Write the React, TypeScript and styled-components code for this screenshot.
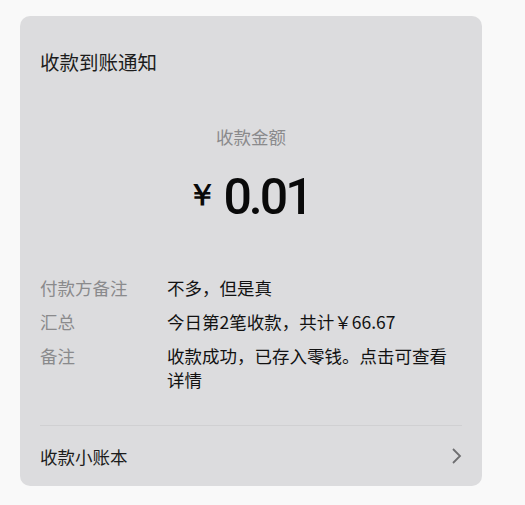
import React from "react";
import styled, { createGlobalStyle } from "styled-components";

const GlobalStyle = createGlobalStyle`
  body {
    margin: 0;
    background: #f9f9f9;
    font-family: "Noto Sans CJK SC", "Noto Sans", sans-serif;
  }
`;

const Page = styled.div`
  padding: 16px 43px 20px 20px;
`;

const Card = styled.div`
  background: #dcdcde;
  border-radius: 10px;
  padding: 0 20px;
  width: 462px;
  box-sizing: border-box;
`;

const Title = styled.div`
  padding-top: 34px;
  font-size: 19.5px;
  line-height: 24px;
  color: #1c1c1c;
`;

const AmountBlock = styled.div`
  display: flex;
  flex-direction: column;
  align-items: center;
  padding-top: 51px;
`;

const AmountLabel = styled.div`
  font-size: 17.5px;
  line-height: 24px;
  color: #8a8a8c;
`;

const Amount = styled.div`
  margin-top: 20px;
  display: flex;
  align-items: baseline;
  gap: 6px;
  line-height: 56px;
  color: #0a0a0a;
  font-family: Roboto, "Noto Sans", sans-serif;
  margin-right: 4px;
`;

const Yen = styled.span`
  font-size: 30px;
  font-weight: 700;
  position: relative;
  top: -9px;
`;

const Digits = styled.span`
  font-size: 50px;
  font-weight: 500;
  letter-spacing: -3px;
`;

const Details = styled.div`
  display: flex;
  flex-direction: column;
  gap: 10px;
  margin-top: 44px;
  padding-bottom: 33px;
  border-bottom: 1px solid #d0d0d2;
`;

const Row = styled.div`
  display: grid;
  grid-template-columns: 127px 1fr;
  font-size: 17.5px;
  line-height: 24px;
`;

const Label = styled.div`
  color: #8a8a8c;
`;

const Value = styled.div`
  color: #121212;
  padding-right: 10px;
`;

const Footer = styled.div`
  height: 60px;
  display: flex;
  align-items: center;
  justify-content: space-between;
  font-size: 17.5px;
  color: #1c1c1c;
`;

const Chevron = () => (
  <svg width="12" height="18" viewBox="0 0 12 18">
    <polyline
      points="3,2 10,9 3,16"
      fill="none"
      stroke="#6e6e70"
      strokeWidth="1.8"
    />
  </svg>
);

const rows = [
  { label: "付款方备注", value: "不多，但是真" },
  { label: "汇总", value: "今日第2笔收款，共计￥66.67" },
  { label: "备注", value: "收款成功，已存入零钱。点击可查看详情" },
];

const App: React.FC = () => (
  <>
    <GlobalStyle />
    <Page>
      <Card>
        <Title>收款到账通知</Title>
        <AmountBlock>
          <AmountLabel>收款金额</AmountLabel>
          <Amount>
            <Yen>￥</Yen>
            <Digits>0.01</Digits>
          </Amount>
        </AmountBlock>
        <Details>
          {rows.map((r) => (
            <Row key={r.label}>
              <Label>{r.label}</Label>
              <Value>{r.value}</Value>
            </Row>
          ))}
        </Details>
        <Footer>
          <span>收款小账本</span>
          <Chevron />
        </Footer>
      </Card>
    </Page>
  </>
);

export default App;
